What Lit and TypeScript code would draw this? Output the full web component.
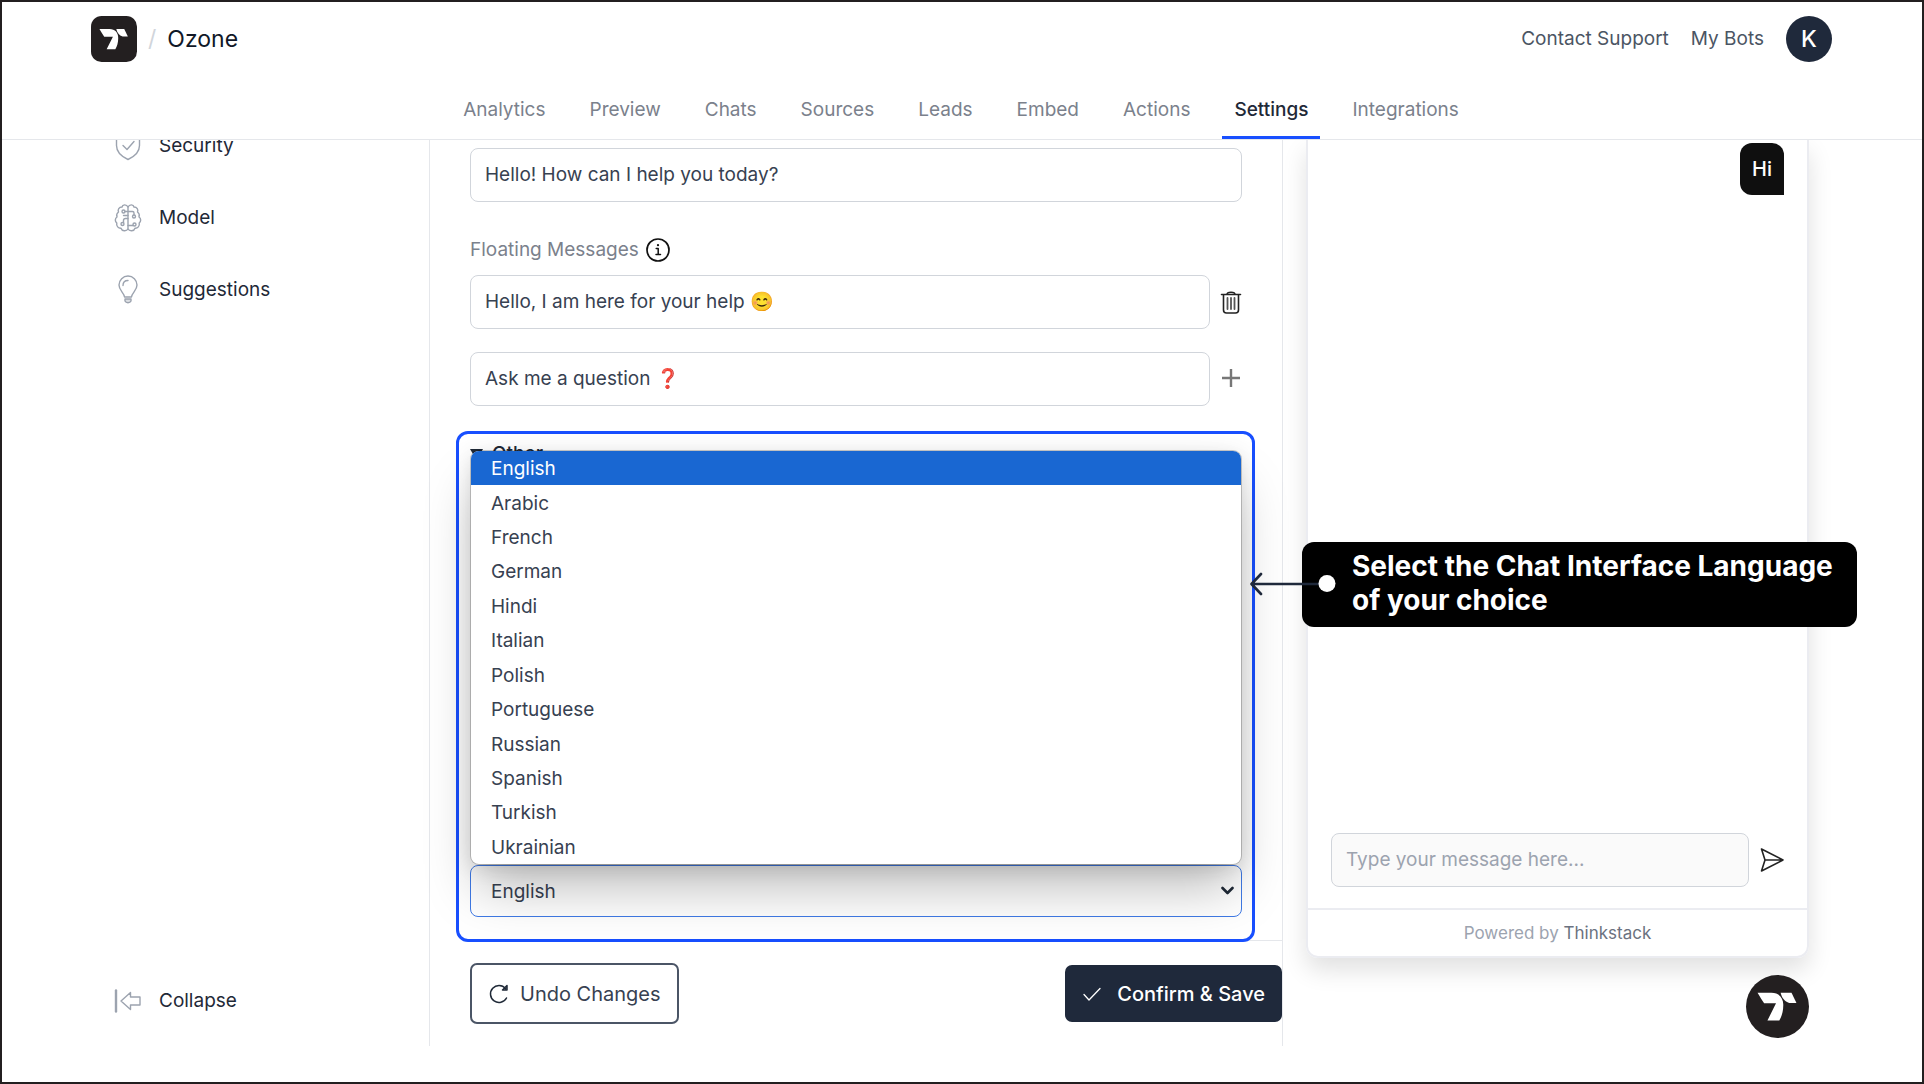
import { LitElement, html, css, svg } from "lit";
import { customElement, property, state } from "lit/decorators.js";
import { classMap } from "lit/directives/class-map.js";

const TABS = ["Analytics", "Preview", "Chats", "Sources", "Leads", "Embed", "Actions", "Settings", "Integrations"];

const LANGUAGES = [
  "English", "Arabic", "French", "German", "Hindi", "Italian",
  "Polish", "Portuguese", "Russian", "Spanish", "Turkish", "Ukrainian",
];

const ICONS = {
  shield: svg`<path d="M14 1.500C11 4 7 5 2.500 5v9c0 6 5 11 11.500 14 6.500-3 11.500-8 11.500-14V5C21 5 17 4 14 1.500z"/><path d="M9 14l4 4 7-8"/>`,
  brain: svg`
    <path d="M14 3.500C12.500 .5 8.500 .8 8 3.500 5 3.500 3.500 6 4.500 8.500 2.500 10 2.500 12 3 13.500.8 15 .8 18 2.800 19.500 2 22.500 4.500 25 7 24.700 8 28 12.500 28 14 25.500"/>
    <path d="M14 3.500C15.500 .5 19.500 .8 20 3.500 23 3.500 24.500 6 23.500 8.500 25.500 10 25.500 12 25 13.500 27.200 15 27.200 18 25.200 19.500 26 22.500 23.500 25 21 24.700 20 28 15.500 28 14 25.500z"/>
    <path d="M11 8h7.500q1.500 0 1.500 1.500V11.500M14 22h5M14 15h-2.500q-2 0-2 2v2M14 12H9.500"/>
    <circle cx="9.500" cy="8" r="1.500"/><circle cx="20" cy="13" r="1.500"/><circle cx="20.500" cy="21" r="1.500"/><circle cx="8.500" cy="20.500" r="1.500"/>`,
  bulb: svg`<path d="M10.500 21.500C10 17 5 15 5 9.500a9 9 0 0 1 18 0c0 5.500-5 7.500-5.500 12z"/><path d="M9 10c0-3 2-5 5-5"/><path d="M11 23.500h6v2c-1 2.300-5 2.300-6 0z" fill="currentColor" fill-opacity=".35"/>`,
  collapse: svg`<path d="M2 4v21" stroke-width="2.400"/><path d="M7 14.500L16.500 6v4.500H26v8h-9.500V23z"/>`,
};

@customElement("brand-mark")
export class BrandMark extends LitElement {
  @property({ type: Boolean }) round = false;

  static styles = css`
    :host { display: block; }
    svg { display: block; width: 100%; height: 100%; }
  `;

  render() {
    return html`<svg viewBox="0 0 191 191" role="img" aria-label="Thinkstack">
      <rect width="191" height="191" rx=${this.round ? 95.5 : 44} fill="#231f20" />
      <path fill="#fff" d="M35 54H77C100 54 114 70 113 92C113 112 108 126 101 138H65L91 86H55C48 76 42 66 35 54Z" />
      <path fill="#fff" d="M105 54H138L153 85H131C117 81 109 70 105 54Z" />
    </svg>`;
  }
}

@customElement("app-root")
export class AppRoot extends LitElement {
  @state() private tab = "Settings";
  @state() private language = "English";

  static styles = css`
    :host {
      display: block;
      font-family: Inter, "Liberation Sans", sans-serif;
      font-size: 19px;
      line-height: 24px;
      color: #374151;
    }
    * { box-sizing: border-box; }
    a { color: inherit; text-decoration: none; }
    button { font: inherit; color: inherit; background: none; border: 0; padding: 0; cursor: pointer; }
    input, select { font: inherit; color: #374151; }

    .frame {
      display: flex;
      flex-direction: column;
      height: 100vh;
      min-height: 900px;
      border: 2px solid #231f20;
      background: #fff;
    }

    .header { border-bottom: 1px solid #e5e7eb; background: #fff; }
    .topbar { display: flex; align-items: center; padding: 14px 90px 0 89px; }
    .logo { width: 46px; height: 46px; }
    .slash { margin: 0 11px; font-size: 23px; color: #d1d5db; }
    .bot { font-size: 23px; color: #111827; }
    .links { display: flex; align-items: center; gap: 22px; margin-left: auto; color: #4b5563; }
    .avatar {
      width: 46px; height: 46px; border-radius: 50%;
      background: #1f293b; color: #fff; font-size: 23px; font-weight: 500;
    }
    .tabs { display: flex; justify-content: center; gap: 20px; padding: 20px 2px 0 0; }
    .tab { padding: 16px 12px 14px; border-bottom: 3px solid transparent; color: #7b818c; }
    .tab.active { color: #1f2937; font-weight: 500; border-color: #184fff; }

    .body {
      flex: 1;
      display: grid;
      grid-template-columns: 339px minmax(600px, 1fr) 526px;
      min-height: 0;
      overflow: hidden;
      padding: 0 113px 0 89px;
      margin-bottom: 36px;
    }

    .side { display: flex; flex-direction: column; border-right: 1px solid #e5e7eb; }
    .side-list { display: flex; flex-direction: column; margin-top: -30px; }
    .side-item { display: flex; align-items: center; gap: 17px; height: 72px; padding-left: 23px; color: #1f2937; }
    .side-item svg, .collapse svg { width: 28px; height: 30px; color: #9ca3af; }
    .collapse { display: flex; align-items: center; gap: 17px; padding-left: 23px; margin: auto 0 30px; color: #1f2937; }
    svg { fill: none; stroke: currentColor; stroke-width: 1.400; stroke-linejoin: round; stroke-linecap: round; flex: none; }

    .main { display: flex; flex-direction: column; border-right: 1px solid #e5e7eb; }
    .form { flex: 1; display: flex; flex-direction: column; padding: 8px 40px 0; }
    .field {
      flex: 1; min-width: 0; width: 100%; height: 54px; padding: 0 14px 2px;
      border: 1px solid #d1d5db; border-radius: 8px; background: #fff;
    }
    .row { display: flex; align-items: center; gap: 10px; }
    .row + .row { margin-top: 23px; }
    .row svg { display: block; width: 22px; height: 24px; color: #222; }
    .row .plus { color: #777; }
    .label { display: flex; align-items: center; gap: 6px; margin: 35px 0 12px; height: 26px; color: #7b818c; }
    .label svg { width: 26px; height: 26px; color: #111; }

    .other {
      position: relative;
      z-index: 2;
      flex: 1;
      display: flex;
      flex-direction: column;
      margin: 25px -13px -2px -14px;
      padding: 8px 10px 22px 11px;
      border: 3px solid #184fff;
      border-radius: 12px;
    }
    .summary { display: flex; align-items: center; gap: 9px; font-weight: 500; color: #1f2937; }
    .summary svg { width: 13px; height: 12px; fill: currentColor; stroke: none; }
    .picker { position: relative; margin-top: auto; }
    .select {
      display: block; width: 100%; height: 52px; padding: 2px 36px 0 20px;
      border: 1px solid #3f7ae6; border-radius: 8px; background: #fff; appearance: none;
    }
    .chevron { position: absolute; right: 8px; top: 20px; width: 13px; height: 12px; stroke-width: 2.600; color: #1f2937; }
    .menu {
      position: absolute; left: 1px; right: 1px; bottom: 100%;
      display: flex; flex-direction: column;
      height: 413px; margin: 0 0 1px; padding: 0; list-style: none;
      background: #fff; border-radius: 8px; overflow: hidden;
      box-shadow: 0 0 0 1px rgba(0, 0, 0, .2), 0 30px 52px -6px rgba(0, 0, 0, .26), 0 4px 20px rgba(0, 0, 0, .12);
    }
    .option { flex: 1; display: flex; align-items: center; padding: 2px 20px 0; }
    .option.selected { background: #1967d2; color: #fff; }

    .callout { position: absolute; z-index: 3; left: calc(100% - 2px); top: 108px; padding-left: 52px; }
    .callout-text {
      margin: 0; padding: 7px 24px 10px 50px; border-radius: 12px; background: #000; color: #fff;
      font-size: 28px; line-height: 34px; font-weight: 700; white-space: nowrap;
    }
    .arrow { position: absolute; left: 0; top: 30px; width: 86px; height: 24px; color: #1f293b; }

    .footer {
      display: flex; justify-content: space-between; align-items: center;
      height: 106px; margin-left: 40px; padding-bottom: 1px; border-top: 1px solid #e5e7eb;
    }
    .undo, .save { display: flex; align-items: center; border-radius: 7px; font-size: 20px; }
    .undo { height: 61px; padding: 1px 16px 0; gap: 10px; border: 2px solid #4b5566; }
    .undo svg { width: 22px; height: 22px; color: #1f2937; }
    .save { height: 57px; padding: 1px 17px 0; gap: 15px; background: #1f293b; color: #fff; font-weight: 500; }
    .save svg { width: 20px; height: 20px; }

    .aside { display: flex; flex-direction: column; padding-left: 23px; }
    .chat {
      flex: 1; display: flex; flex-direction: column; min-height: 0;
      border: 2px solid #ebecf1; border-top: 0; border-radius: 0 0 12px 12px;
      box-shadow: 0 12px 24px rgba(0, 0, 0, .12);
    }
    .messages { flex: 1; display: flex; flex-direction: column; align-items: flex-end; padding: 3px 23px 0; }
    .bubble { padding: 14px 12px; border-radius: 12px 12px 0 12px; background: #0f0f0f; color: #fff; font-size: 20px; font-weight: 500; }
    .compose { display: flex; align-items: center; gap: 10px; padding: 0 22px 21px 23px; }
    .compose .field { background: #fafafa; }
    .field::placeholder { color: #9ca3af; opacity: 1; }
    .compose svg { display: block; width: 26px; height: 26px; color: #222; stroke-width: 1.600; }
    .powered { padding: 11px; border-top: 2px solid #ebecf1; text-align: center; font-size: 17px; color: #9ca3af; }
    .powered a { color: #6b7280; }
    .launcher { align-self: flex-end; margin: 17px 0 8px; border-radius: 50%; }
    .launcher brand-mark { width: 63px; height: 63px; }
  `;

  private sideItem(label: string, icon: keyof typeof ICONS) {
    return html`<a class="side-item" href="#"><svg viewBox="0 0 28 29" aria-hidden="true">${ICONS[icon]}</svg>${label}</a>`;
  }

  private header() {
    return html`<header class="header">
      <div class="topbar">
        <brand-mark class="logo"></brand-mark>
        <span class="slash">/</span>
        <span class="bot">Ozone</span>
        <div class="links">
          <a href="#">Contact Support</a>
          <a href="#">My Bots</a>
          <button class="avatar">K</button>
        </div>
      </div>
      <nav class="tabs">
        ${TABS.map((name) => html`<a href="#" class=${classMap({ tab: true, active: name === this.tab })}
          @click=${() => (this.tab = name)}>${name}</a>`)}
      </nav>
    </header>`;
  }

  private languagePicker() {
    return html`<div class="picker">
      <select class="select" aria-label="Chat interface language"
        @change=${(e: Event) => (this.language = (e.target as HTMLSelectElement).value)}>
        ${LANGUAGES.map((l) => html`<option ?selected=${l === this.language}>${l}</option>`)}
      </select>
      <svg class="chevron" viewBox="0 0 13 12" aria-hidden="true"><path d="M1.500 3l5 5 5-5" /></svg>
      <ul class="menu" role="listbox" aria-label="Languages">
        ${LANGUAGES.map((l) => html`<li role="option" aria-selected=${l === this.language}
          class=${classMap({ option: true, selected: l === this.language })}
          @click=${() => (this.language = l)}>${l}</li>`)}
      </ul>
    </div>`;
  }

  render() {
    return html`<div class="frame">
      ${this.header()}
      <div class="body">
        <aside class="side">
          <nav class="side-list">
            ${this.sideItem("Security", "shield")}
            ${this.sideItem("Model", "brain")}
            ${this.sideItem("Suggestions", "bulb")}
          </nav>
          <button class="collapse"><svg viewBox="0 0 28 29" aria-hidden="true">${ICONS.collapse}</svg>Collapse</button>
        </aside>

        <main class="main">
          <div class="form">
            <div class="row"><input class="field" aria-label="Welcome message" value="Hello! How can I help you today?" /></div>
            <div class="label">
              <label for="floating">Floating Messages</label>
              <svg viewBox="0 0 26 26" aria-hidden="true"><circle cx="13" cy="13" r="11" stroke-width="1.700" />
                <path d="M11.200 11.500h2v5.500M11 17.500h4.500" stroke-width="1.500" /><path d="M13 8v.2" stroke-width="2.200" /></svg>
            </div>
            <div class="row">
              <input class="field" id="floating" value="Hello, I am here for your help 😊" />
              <button aria-label="Delete message"><svg viewBox="1 0 22 24">
                <path d="M2.500 4.500h19M8 4.500C8 1.500 16 1.500 16 4.500M4.500 4.500v15.500q0 3 3 3h9q3 0 3-3V4.500" stroke-width="1.600" />
                <path d="M8.500 8v11M12 8v11M15.500 8v11" stroke="#555" stroke-width="1.800" /></svg></button>
            </div>
            <div class="row">
              <input class="field" aria-label="Second floating message" value="Ask me a question ❓" />
              <button aria-label="Add message"><svg class="plus" viewBox="1 0 22 24"><path d="M12 2v18M3 11h18" stroke-width="2.400" stroke-linecap="butt" /></svg></button>
            </div>
            <section class="other">
              <div class="summary"><svg viewBox="0 0 13 12" aria-hidden="true"><path d="M0 1h13L6.500 12z" /></svg>Other</div>
              ${this.languagePicker()}
              <div class="callout" role="note">
                <p class="callout-text">Select the Chat Interface Language<br />of your choice</p>
                <svg class="arrow" viewBox="0 0 86 24" aria-hidden="true">
                  <path d="M2 12h72M11 2L1.500 12l9.500 10" stroke-width="2.600" />
                  <circle cx="77" cy="11.500" r="8.500" fill="#fff" stroke="none" />
                </svg>
              </div>
            </section>
          </div>
          <footer class="footer">
            <button class="undo"><svg viewBox="0 0 22 22" aria-hidden="true">
              <path d="M18.500 15a8.500 8.500 0 1 1-1-9.500M19 2.500V7h-4.500z" stroke-width="1.500" /></svg>Undo Changes</button>
            <button class="save"><svg viewBox="0 0 20 20" aria-hidden="true"><path d="M2 10.500l5 5.500L18 4.500" stroke-width="1.300" /></svg>Confirm &amp; Save</button>
          </footer>
        </main>

        <aside class="aside">
          <section class="chat">
            <div class="messages"><div class="bubble">Hi</div></div>
            <div class="compose">
              <input class="field" aria-label="Message" placeholder="Type your message here..." />
              <button aria-label="Send"><svg viewBox="0 0 26 26"><path d="M2.500 2L24 13 2.500 24 6 13zM6 13h18" /></svg></button>
            </div>
            <div class="powered">Powered by <a href="#">Thinkstack</a></div>
          </section>
          <button class="launcher" aria-label="Open chat"><brand-mark round></brand-mark></button>
        </aside>
      </div>
    </div>`;
  }
}
